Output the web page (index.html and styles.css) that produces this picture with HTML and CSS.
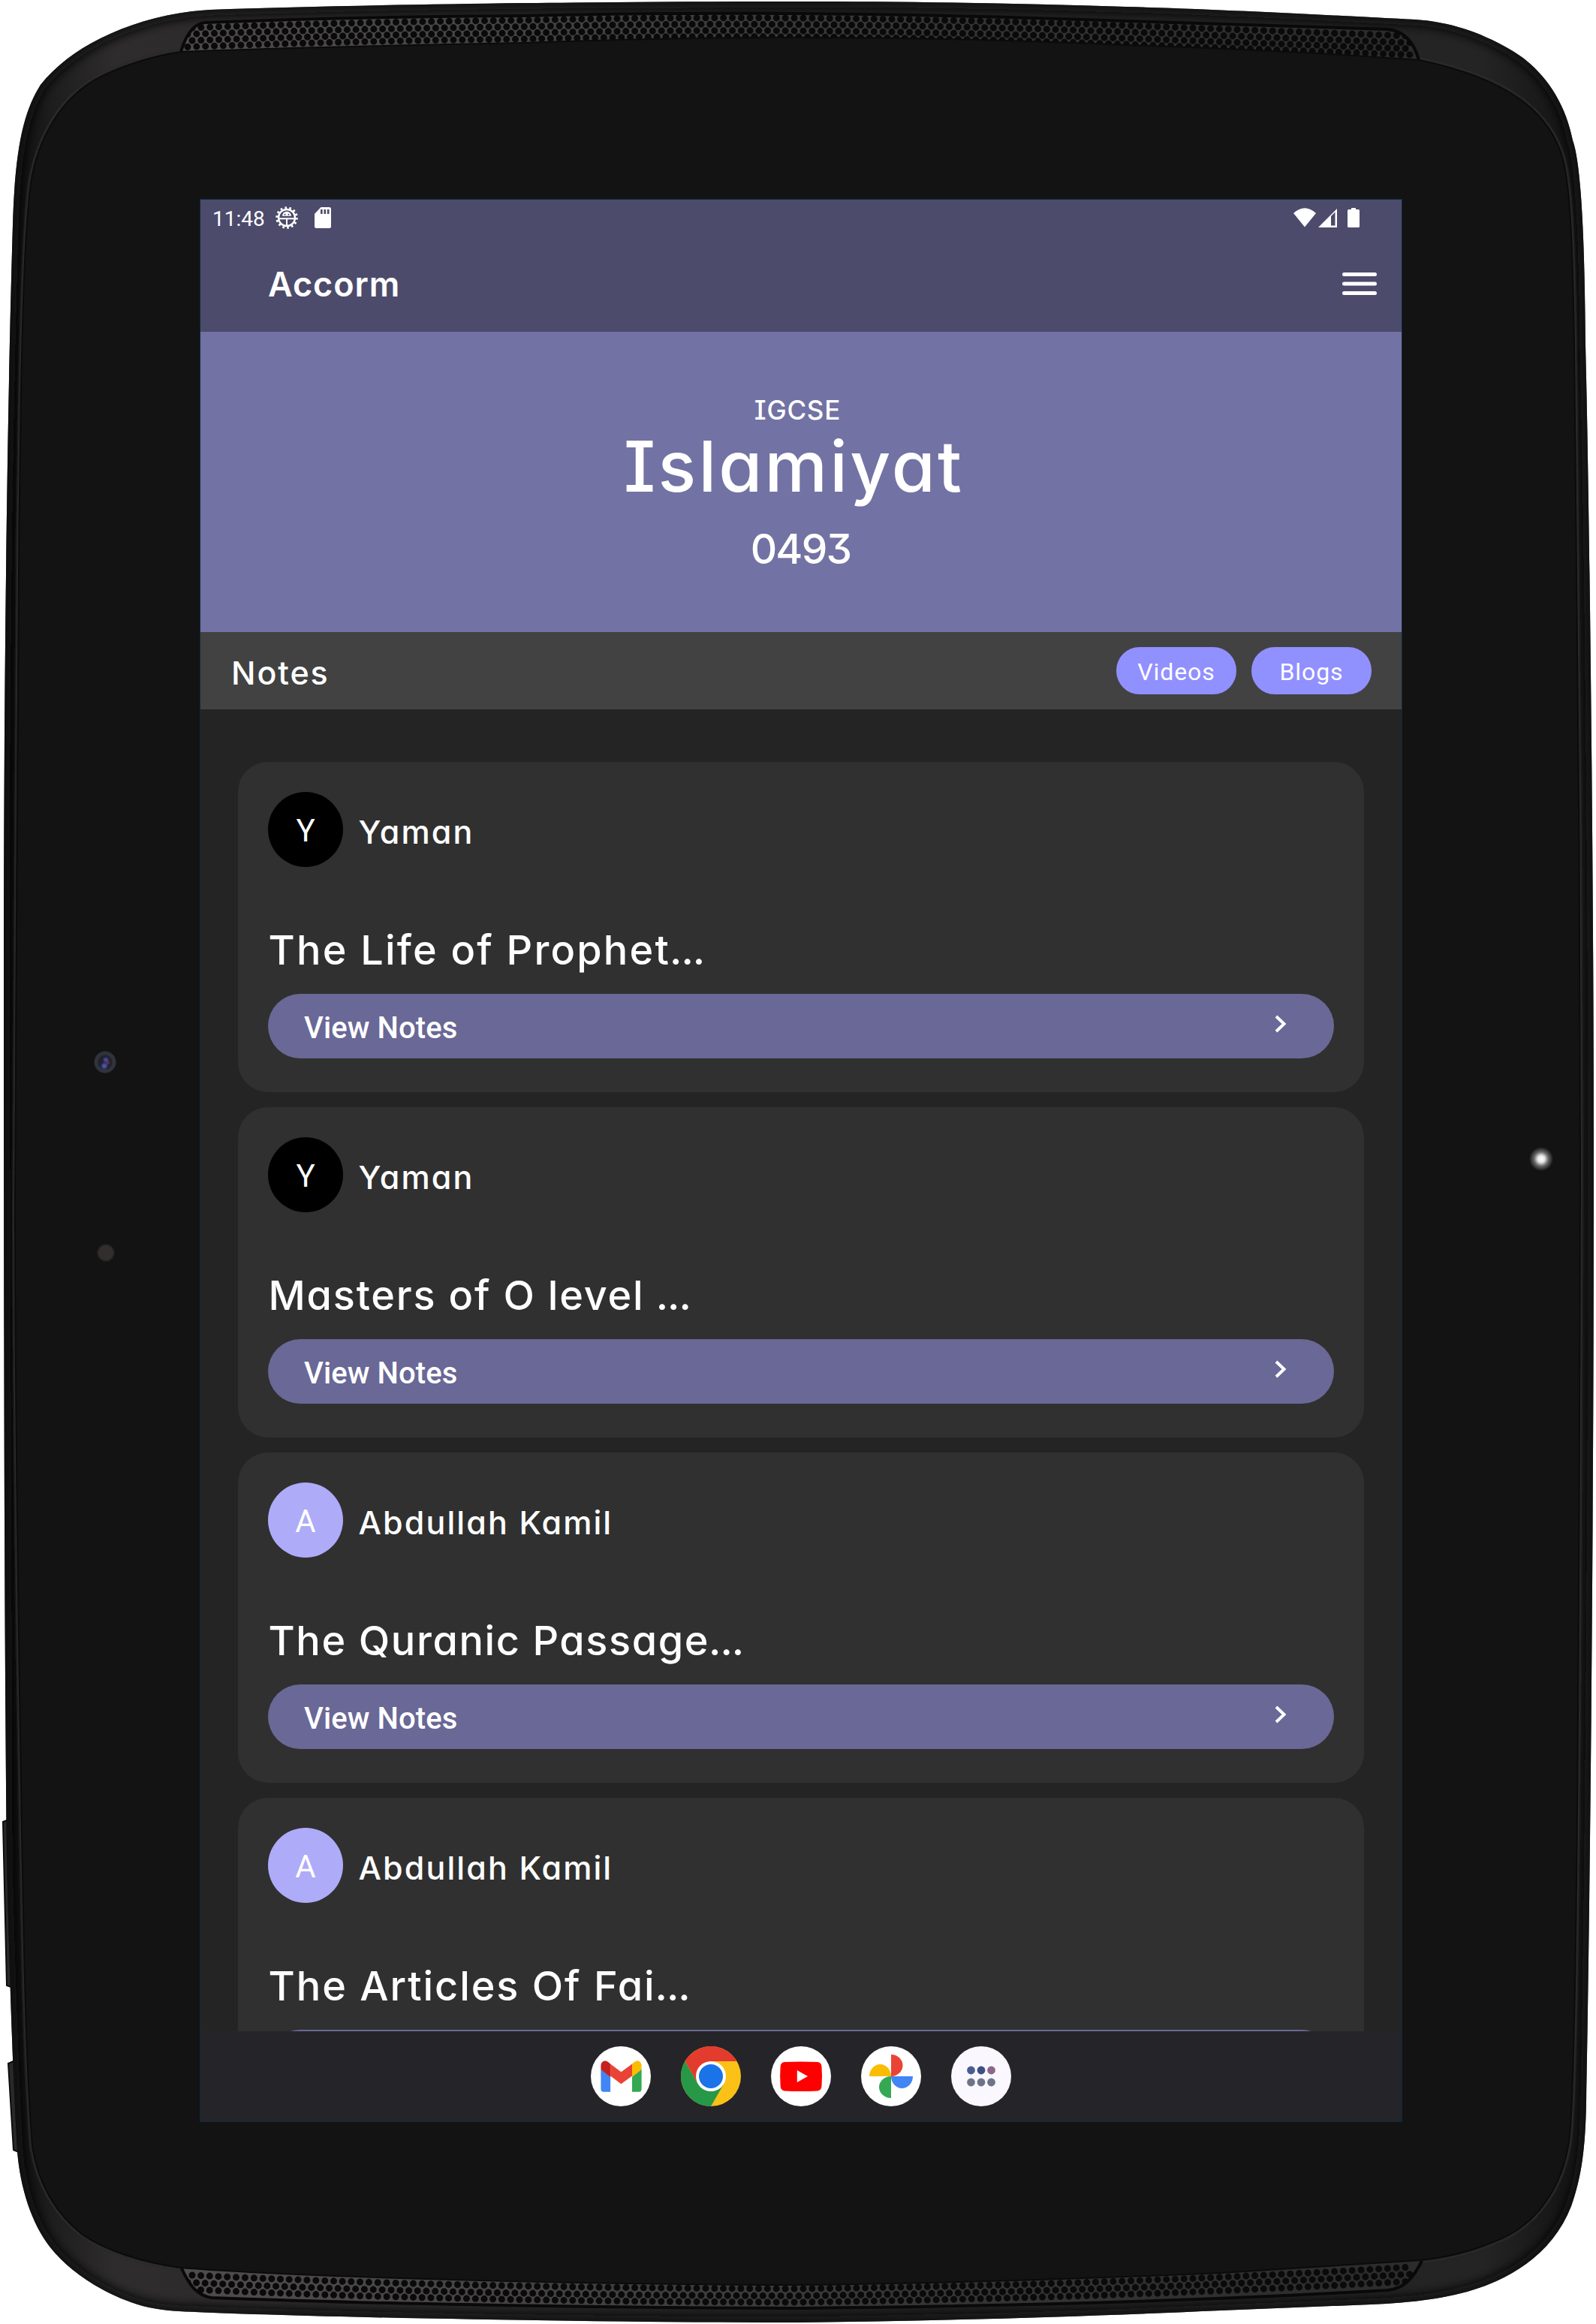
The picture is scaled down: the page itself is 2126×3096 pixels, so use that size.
FILE: index.html
```html
<!DOCTYPE html>
<html lang="en">
<head>
<meta charset="utf-8">
<title>Accorm – Islamiyat</title>
<link rel="stylesheet" href="styles.css">
</head>
<body>
<div class="tablet">
  <svg class="frame" viewBox="0 0 2126 3096" aria-hidden="true">
    <defs>
      <linearGradient id="rim" x1="0" y1="0" x2="1" y2="0">
        <stop offset="0" stop-color="#0b0b0b"/><stop offset=".03" stop-color="#1e1d1d"/><stop offset=".07" stop-color="#2e2c2c"/>
        <stop offset=".5" stop-color="#232222"/><stop offset=".93" stop-color="#242424"/><stop offset=".98" stop-color="#161616"/><stop offset="1" stop-color="#1c1c1c"/>
      </linearGradient>
      <linearGradient id="mesh" x1="0" y1="0" x2="1" y2="0">
        <stop offset="0" stop-color="#504c4d"/><stop offset=".3" stop-color="#444243"/><stop offset=".6" stop-color="#363536"/><stop offset="1" stop-color="#2b2b2b"/>
      </linearGradient>
      <radialGradient id="glow"><stop offset="0" stop-color="#fff"/><stop offset=".28" stop-color="#e8e8e8"/><stop offset=".6" stop-color="#666"/><stop offset="1" stop-color="#131313"/></radialGradient>
      <filter id="soft" x="-5%" y="-5%" width="110%" height="110%"><feGaussianBlur stdDeviation="1"/></filter>
      <filter id="shade" x="-5%" y="-5%" width="110%" height="110%"><feGaussianBlur stdDeviation="7"/></filter>
      <path id="body" d="M1063 2C920 2 800 3 700 4C540 6 400 9 280 13C225 16 175 31 134 51C100 68 74 88 54 113C32 148 20 195 17 300C11 500 5 850 5 1300C5 1800 6 2200 9 2480C12 2600 16 2745 23 2866C27 2915 42 2962 67 2994C92 3026 140 3058 190 3072C215 3078 233 3079 260 3080C420 3087 800 3094 1063 3094C1250 3092 1450 3086 1626 3078L1826 3070C1893 3067 1946 3060 1993 3039C2040 3018 2075 2985 2093 2939C2107 2900 2112 2860 2113 2800C2117 2596 2123 2100 2123 1550C2123 1200 2118 700 2112 460C2111 330 2107 220 2095 187C2085 135 2055 90 2010 65C1970 42 1930 29 1885 26C1800 22 1650 13 1500 9C1350 4 1200 2 1063 2Z"/>
      <path id="face" d="M1063 50C900 50 780 54 700 57C540 60 380 63 241 69C200 75 155 90 125 107C75 137 45 195 39 260C32 330 30 430 28 520C22 900 20 1300 20 1600C20 1900 25 2200 29 2440C32 2600 34 2745 43 2860C51 2910 75 2950 110 2977C140 2998 190 3014 240 3021C400 3034 800 3044 1063 3044C1250 3042 1440 3036 1626 3028L1893 3011C1930 3007 1960 2999 1986 2988C2040 2970 2083 2920 2091 2845C2099 2760 2103 2400 2105 1550C2105 1200 2101 750 2097 460C2095 330 2092 250 2082 212C2065 150 2010 105 1891 80C1760 70 1620 64 1500 60C1350 53 1200 50 1063 50Z"/>
      <clipPath id="bodyClip"><use href="#body"/></clipPath>
      <clipPath id="topMesh"><path d="M241 69C248 45 258 31 274 31Q480 23 700 22Q1063 14 1500 30L1848 40C1872 42 1884 58 1889 80Q1500 60 1500 60Q1063 45 700 56Z"/></clipPath>
      <clipPath id="lowMesh"><path d="M242 3022C252 3044 262 3058 282 3060Q600 3072 1063 3074Q1500 3070 1848 3050C1872 3048 1884 3032 1893 3012Q1500 3035 1063 3043Q600 3043 242 3022Z"/></clipPath>
    </defs>
    <g fill="#292929" stroke="#0c0c0c" stroke-width="2">
      <path d="M12 2424L4 2427L9 2645L18 2648Z"/><path d="M20 2745L11 2749L18 2864L27 2868Z"/>
    </g>
    <use href="#body" fill="url(#rim)"/>
    <g clip-path="url(#bodyClip)">
      <use href="#body" fill="none" stroke="#080808" stroke-width="16" filter="url(#shade)"/>
      <use href="#face" fill="none" stroke="#2b2b2b" stroke-width="7" filter="url(#soft)"/>
    </g>
    <g clip-path="url(#topMesh)" fill="none">
      <rect y="0" x="230" width="1670" height="90" fill="url(#mesh)"/>
      <g class="holes">
        <path d="M256 37Q480 29 700 27Q1063 18 1500 34L1880 48"/>
        <path d="M250 45.5Q480 38 700 35.500Q1063 26.500 1500 42.500L1880 57"/>
        <path d="M256 54Q480 46 700 44Q1063 35 1500 51L1880 65"/>
        <path d="M250 62.500Q480 54 700 52Q1063 43 1500 59L1880 73"/>
      </g>
    </g>
    <g clip-path="url(#lowMesh)" fill="none">
      <rect y="3000" x="230" width="1670" height="90" fill="url(#mesh)"/>
      <g class="holes">
        <path d="M256 3031Q600 3048 1063 3049Q1500 3044 1880 3020"/>
        <path d="M250 3040.500Q600 3057.500 1063 3058.500Q1500 3052.500 1880 3029.500"/>
        <path d="M256 3050Q600 3066 1063 3067Q1500 3061 1880 3039"/>
      </g>
    </g>
    <g fill="none" stroke="#090909" stroke-width="4">
      <path d="M241 69C248 45 258 31 274 30Q480 22 700 21Q1063 12 1500 28L1848 39C1872 41 1884 58 1890 80"/>
      <path d="M242 3022C252 3044 262 3058 282 3061Q600 3073 1063 3075Q1500 3071 1848 3051C1872 3049 1884 3032 1894 3012"/>
    </g>
    <use href="#face" fill="#131313" stroke="#0b0b0b" stroke-width="2"/>
    <circle cx="140" cy="1415" r="12" fill="#20222c" stroke="#30333c" stroke-width="5"/>
    <g filter="url(#soft)"><circle cx="141" cy="1412" r="3" fill="#4b4ba0"/><circle cx="139" cy="1420" r="3.500" fill="#4856b4"/><circle cx="144" cy="1416" r="2" fill="#733248"/></g>
    <circle cx="141" cy="1669" r="11" fill="#302e2e" filter="url(#soft)"/>
    <circle cx="2053" cy="1544" r="16" fill="url(#glow)"/>
  </svg>

  <div class="screen">
    <header class="top">
      <div class="status">
        <span class="clock">11:48</span>
        <svg class="bug" width="30" height="30" viewBox="0 0 30 30"><circle cx="15" cy="15" r="13.300" fill="none" stroke="#fff" stroke-width="3" stroke-dasharray="2.600 3.370"/><circle cx="15" cy="15" r="11" fill="none" stroke="#fff" stroke-width="2.400"/><path d="M9 12.800A6 6 0 0 1 21 12.800Z" fill="#fff"/><path d="M4 16.200H26M15 16V26" stroke="#fff" stroke-width="1.900"/><circle cx="12.500" cy="10.800" r="1" fill="#4c4b6c"/><circle cx="17.500" cy="10.800" r="1" fill="#4c4b6c"/></svg>
        <svg class="sd" width="22" height="28" viewBox="0 0 22 28"><path d="M8.500 0H19.500Q22 0 22 2.500V25.500Q22 28 19.500 28H2.500Q0 28 0 25.500V9Z" fill="#fff"/><path d="M9.300 3V9M13.800 3V9M18.200 3V9" stroke="#4c4b6c" stroke-width="2.600"/></svg>
        <svg class="signals" width="90" height="26" viewBox="0 0 90 26" fill="#fff"><path d="M0 7Q15-6.500 30 7L15 25.500Z"/><path fill-rule="evenodd" d="M33 26L58 1V26ZM50 11V23.500H55.500V5.500Z"/><path d="M77 0H83V2H86.500Q88 2 88 3.500V24.500Q88 26 86.500 26H73.500Q72 26 72 24.500V3.500Q72 2 73.500 2H77Z"/></svg>
      </div>
      <div class="appbar">
        <h1 class="brand">Accorm</h1>
        <svg width="46" height="30" viewBox="0 0 46 30"><path d="M2.500 2.500H43.500M2.500 15H43.500M2.500 27.500H43.500" stroke="#fff" stroke-width="5" stroke-linecap="round"/></svg>
      </div>
    </header>

    <section class="hero">
      <div class="level">IGCSE</div>
      <div class="subject">Islamiyat</div>
      <div class="code">0493</div>
    </section>

    <nav class="tabs">
      <span class="current">Notes</span>
      <a class="pill">Videos</a>
      <a class="pill">Blogs</a>
    </nav>

    <main class="list">
      <article class="card">
        <div class="author"><span class="avatar">Y</span><span class="name">Yaman</span></div>
        <h2 class="title t1">The Life of Prophet<span class="dots">...</span></h2>
        <a class="view">View Notes<svg width="16" height="24" viewBox="0 0 16 24"><path d="M2 2L12.500 12L2 22" fill="none" stroke="#fff" stroke-width="4"/></svg></a>
      </article>
      <article class="card">
        <div class="author"><span class="avatar">Y</span><span class="name">Yaman</span></div>
        <h2 class="title t2">Masters of O level <span class="dots">...</span></h2>
        <a class="view">View Notes<svg width="16" height="24" viewBox="0 0 16 24"><path d="M2 2L12.500 12L2 22" fill="none" stroke="#fff" stroke-width="4"/></svg></a>
      </article>
      <article class="card">
        <div class="author"><span class="avatar lilac">A</span><span class="name">Abdullah Kamil</span></div>
        <h2 class="title t3">The Quranic Passage<span class="dots">...</span></h2>
        <a class="view">View Notes<svg width="16" height="24" viewBox="0 0 16 24"><path d="M2 2L12.500 12L2 22" fill="none" stroke="#fff" stroke-width="4"/></svg></a>
      </article>
      <article class="card">
        <div class="author"><span class="avatar lilac">A</span><span class="name">Abdullah Kamil</span></div>
        <h2 class="title">The Articles Of Fai<span class="dots">...</span></h2>
        <a class="view"></a>
      </article>
    </main>

    <footer class="dock">
      <svg viewBox="0 0 80 80"><circle cx="40" cy="40" r="40" fill="#fff"/><path d="M13.400 30.500L26.100 40.500V60.700H17Q13.400 60.700 13.400 57Z" fill="#4285f4"/><path d="M67.600 30.500L55 40.500V60.700H64Q67.600 60.700 67.600 57Z" fill="#34a853"/><path d="M13.400 31V26C13.400 20 19 17.500 23.500 21.300L26.100 23.500V41Z" fill="#c5221f"/><path d="M67.600 31V26C67.600 20 62 17.500 57.500 21.300L55 23.500V41Z" fill="#fbbc04"/><path d="M26.100 23.400L40.400 34.300L55 23.400V39.500L40.400 50.300L26.100 39.500Z" fill="#ea4335"/></svg>
      <svg viewBox="0 0 80 80"><circle cx="40" cy="40" r="40" fill="#fbc116"/><path d="M5.400 20A40 40 0 0 1 74.600 20H40L22.700 50Z" fill="#e33b2e"/><path d="M5.400 20A40 40 0 0 0 40 80L57.300 50H22.700Z" fill="#279847"/><circle cx="40" cy="40" r="20" fill="#fff"/><circle cx="40" cy="40" r="16" fill="#1a73e8"/></svg>
      <svg viewBox="0 0 80 80"><circle cx="40" cy="40" r="40" fill="#fff"/><path d="M18 21Q40 20 62 21Q67 21.500 67.500 27Q68.500 40 67.500 53Q67 59 62 59.400Q40 60.500 18 59.400Q13 59 12.600 53Q11.700 40 12.600 27Q13 21.500 18 21Z" fill="#f00"/><path d="M34.800 32L49 40L34.800 48Z" fill="#fff"/></svg>
      <svg viewBox="0 0 80 80"><circle cx="40" cy="40" r="40" fill="#fff"/><path d="M40 11A15.500 14.500 0 0 1 40 40Z" fill="#ea4335"/><path d="M11 40A14.500 16 0 0 1 40 40Z" fill="#fbbc04"/><path d="M40 40H69A14.500 16 0 0 1 40 40Z" fill="#4285f4"/><path d="M40 40V69A16 14.500 0 0 1 40 40Z" fill="#34a853"/></svg>
      <svg viewBox="0 0 80 80"><circle cx="40" cy="40" r="40" fill="#faf8fe"/><g fill="#6e7488"><circle cx="26.500" cy="32" r="5.400" fill="#4b5c92"/><circle cx="40" cy="32" r="5.400" fill="#3d4f85"/><circle cx="53.500" cy="32" r="5.400" fill="#8b6889"/><circle cx="26.500" cy="48" r="5.400"/><circle cx="40" cy="48" r="5.400"/><circle cx="53.500" cy="48" r="5.400"/></g></svg>
    </footer>
  </div>
</div>
</body>
</html>
```
FILE: styles.css
```css
* { box-sizing: border-box; }
body { margin: 0; background: #fff; }

.tablet {
  position: relative;
  width: 2126px;
  height: 3096px;
  padding: 266px 259px 270px 267px;
  overflow: hidden;
}
.frame { position: absolute; inset: 0; width: 100%; height: 100%; }
.holes { stroke: #0a0a0a; stroke-width: 9; stroke-linecap: round; stroke-dasharray: 0 11.8; }

.screen {
  position: relative;
  display: flex;
  flex-direction: column;
  width: 1600px;
  height: 2560px;
  background: #242424;
  outline: 1px solid #0d2b3d;
  color: #fff;
  font-family: Inter, "Open Sans", sans-serif;
  font-weight: 450;
  font-feature-settings: "cv11", "cv08", "cv09";
  overflow: hidden;
}

.top { height: 176px; flex: none; background: #4c4b6c; }
.status { display: flex; align-items: center; height: 48px; padding: 0 54px 0 16px; }
.clock { width: 71px; margin-top: 4px; font: 400 28px/32px Roboto, sans-serif; }
.bug { margin-left: 13px; }
.sd { margin-left: 22px; }
.signals { margin-left: auto; }
.appbar { display: flex; align-items: center; justify-content: space-between; padding: 34px 33px 0 90px; }
.brand { margin: 0; padding-top: 2px; font-size: 45px; line-height: 58px; font-weight: 600; letter-spacing: 0.9px; }

.hero {
  display: flex;
  flex-direction: column;
  align-items: center;
  height: 400px;
  flex: none;
  padding: 82px 11px 0 0;
  background: #7372a4;
  white-space: nowrap;
}
.level { margin-left: 2px; font-size: 35px; line-height: 44px; letter-spacing: 0.8px; font-weight: 500; }
.subject { margin: -2px 8px 2px 0; font-size: 94px; line-height: 110px; letter-spacing: 3.2px; }
.code { margin: 3px 0 0 10px; font-size: 55px; line-height: 100px; font-weight: 500; letter-spacing: -1.8px; }

.tabs { display: flex; align-items: center; gap: 20px; height: 103px; flex: none; padding: 0 40px 0 41px; background: #424242; }
.current { margin-right: auto; font-size: 43px; letter-spacing: 1.9px; padding-top: 4px; }
.pill {
  width: 160px;
  height: 63px;
  border-radius: 31px;
  background: #9190ff;
  font: 400 32px/66px Roboto, sans-serif;
  letter-spacing: 0.9px;
  text-align: center;
}

.list { display: flex; flex-direction: column; gap: 20px; flex: 1; min-height: 0; padding: 70px 50px 0; overflow: hidden; }
.card { height: 440px; flex: none; padding: 40px 40px 0; border-radius: 40px; background: #303030; }
.author { display: flex; height: 100px; gap: 20.5px; }
.avatar {
  width: 100px;
  height: 100px;
  border-radius: 50%;
  background: #000;
  font: 400 42px/104px Roboto, sans-serif;
  text-align: center;
}
.lilac { background: #aeabf8; }
.name { font-size: 43px; line-height: 107px; letter-spacing: 2.1px; }
.title { margin: 73px 0 0 0.5px; height: 96px; font-size: 54px; line-height: 76px; font-weight: 450; letter-spacing: 1.95px; white-space: nowrap; }
.t1 { letter-spacing: 2.2px; }
.t2 { letter-spacing: 1.8px; }
.t3 { letter-spacing: 1.6px; }
.dots { margin-left: -1px; letter-spacing: -1px; }
.view {
  display: flex;
  justify-content: space-between;
  height: 86px;
  padding: 0 63px 0 48px;
  border-radius: 43px;
  background: #696896;
  font: 500 40px/92px Roboto, sans-serif;
  letter-spacing: 0.1px;
}
.view svg { margin-top: 28px; }

.dock { display: flex; align-items: center; justify-content: center; gap: 40px; height: 120px; flex: none; background: #252429; }
.dock svg { width: 80px; height: 80px; }
```
